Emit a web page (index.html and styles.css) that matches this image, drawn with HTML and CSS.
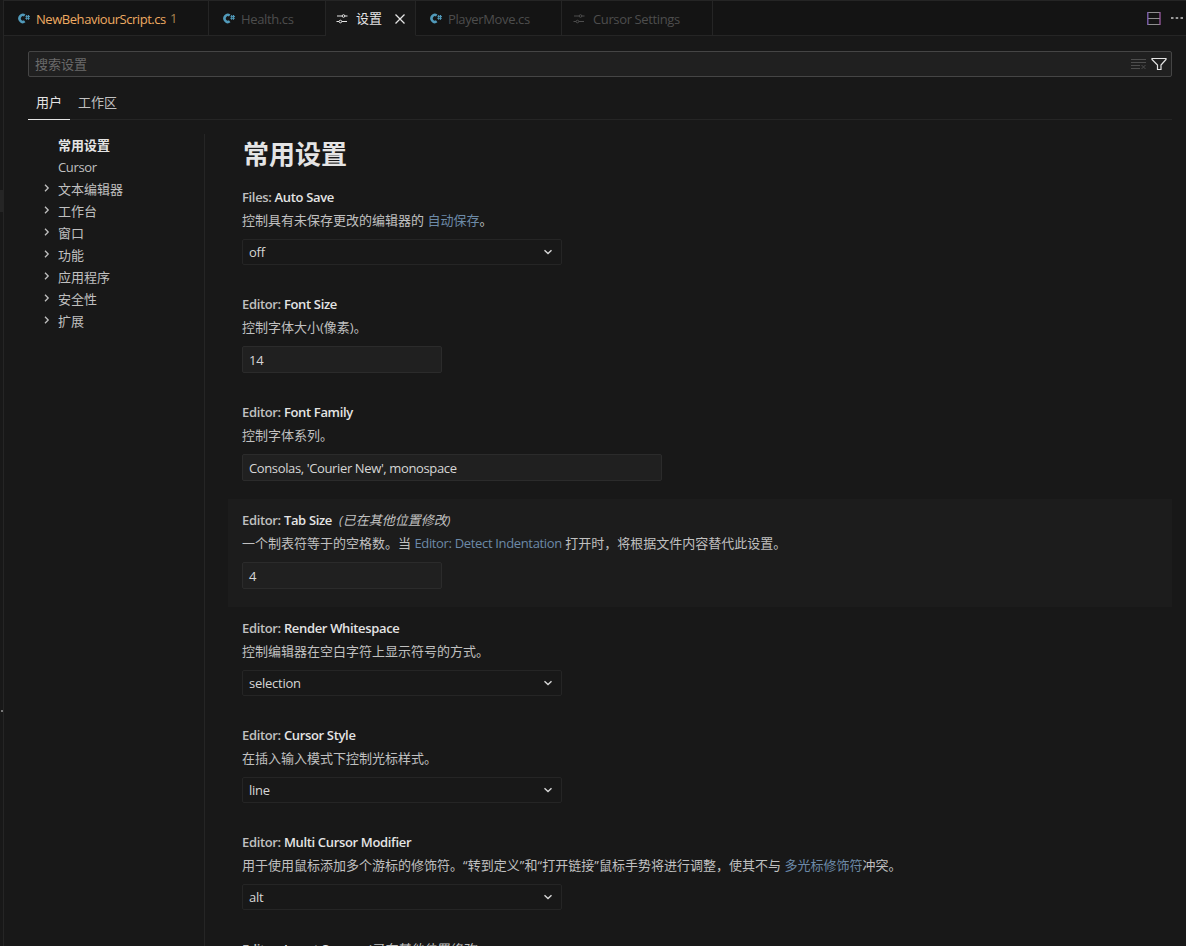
FILE: index.html
```html
<!DOCTYPE html>
<html lang="zh-CN">
<head>
  <meta charset="UTF-8">
  <meta name="viewport" content="width=device-width, initial-scale=1.0">
  <title>设置</title>
  <link rel="stylesheet" href="styles.css">
</head>
<body>
  <svg class="symbols" aria-hidden="true">
    <symbol id="icon-csharp" viewBox="0 0 12 11">
      <path d="M6.700 2.500A3.300 3.500 0 1 0 6.700 8.300" fill="none" stroke="currentColor" stroke-width="2.600"/>
      <path d="M8.700 2v4.800M10.500 2v4.800M7.500 3.400H12M7.300 5.300h4.500" fill="none" stroke="currentColor" stroke-width="1"/>
    </symbol>
    <symbol id="icon-settings" viewBox="0 0 12 10">
      <path d="M1 2h5.200M9 2h2.500M0.500 7.500h2.500M5.800 7.500H11" fill="none" stroke="currentColor" stroke-width="1.200"/>
      <circle cx="7.500" cy="2" r="1.300" fill="none" stroke="currentColor"/>
      <circle cx="4.400" cy="7.500" r="1.300" fill="none" stroke="currentColor"/>
    </symbol>
    <symbol id="icon-right" viewBox="0 0 8 8">
      <path d="M2 0.8 5.200 4 2 7.200" fill="none" stroke="currentColor" stroke-width="1.300"/>
    </symbol>
    <symbol id="icon-down" viewBox="0 0 8 8">
      <path d="M0.500 2.200 4 5.600 7.500 2.200" fill="none" stroke="currentColor" stroke-width="1.400"/>
    </symbol>
  </svg>

  <div class="side-strip">
    <div class="side-thumb"></div>
    <div class="side-dot"></div>
  </div>

  <div class="editor">
    <div class="tab-bar">
      <div class="tab tab-script"><svg class="lang-icon"><use href="#icon-csharp"/></svg><span>NewBehaviourScript.cs</span><span class="badge">1</span></div>
      <div class="tab tab-health"><svg class="lang-icon"><use href="#icon-csharp"/></svg><span>Health.cs</span></div>
      <div class="tab tab-settings active"><svg class="gear-icon"><use href="#icon-settings"/></svg><span>设置</span><svg class="close" viewBox="0 0 10 10"><path d="M0.500 0.500l9 9M9.500 0.500l-9 9" fill="none" stroke="currentColor" stroke-width="1.300"/></svg></div>
      <div class="tab tab-player"><svg class="lang-icon"><use href="#icon-csharp"/></svg><span>PlayerMove.cs</span></div>
      <div class="tab tab-cursor"><svg class="gear-icon"><use href="#icon-settings"/></svg><span>Cursor Settings</span></div>
      <div class="actions">
        <svg class="split" viewBox="0 0 14 14"><path d="M1 1.500h12M1 7.500h12M1 13.500h12" stroke="#8f8f8f"/><path d="M0.800 1v13" stroke="#8464b8" stroke-width="1.300"/><path d="M13 1v13" stroke="#9a5aa0" stroke-width="1.300"/></svg>
        <svg class="more" viewBox="0 0 12 2"><path d="M0 0h2.500v2H0zM4.700 0h2.500v2H4.700zM9.500 0H12v2H9.500z" fill="currentColor"/></svg>
      </div>
    </div>

    <div class="settings">
      <div class="search">
        <span class="placeholder">搜索设置</span>
        <svg class="clear" viewBox="0 0 16 12"><path d="M0 1.500h15M0 4.500h15M0 7.500h9M0 10.500h9M10.500 7l4 4M14.500 7l-4 4" fill="none" stroke="currentColor"/></svg>
        <svg class="filter" viewBox="0 0 16 14"><path d="M1 1.500h14v1L10 8v4.500H6.500V8L1 2.500z" fill="none" stroke="currentColor" stroke-width="1.200"/></svg>
      </div>

      <div class="scopes">
        <div class="scope active">用户</div>
        <div class="scope">工作区</div>
      </div>

      <div class="content">
        <div class="toc">
          <div class="toc-item selected"><span>常用设置</span></div>
          <div class="toc-item latin">Cursor</div>
          <div class="toc-item"><svg class="chevron"><use href="#icon-right"/></svg><span>文本编辑器</span></div>
          <div class="toc-item"><svg class="chevron"><use href="#icon-right"/></svg><span>工作台</span></div>
          <div class="toc-item"><svg class="chevron"><use href="#icon-right"/></svg><span>窗口</span></div>
          <div class="toc-item"><svg class="chevron"><use href="#icon-right"/></svg><span>功能</span></div>
          <div class="toc-item"><svg class="chevron"><use href="#icon-right"/></svg><span>应用程序</span></div>
          <div class="toc-item"><svg class="chevron"><use href="#icon-right"/></svg><span>安全性</span></div>
          <div class="toc-item"><svg class="chevron"><use href="#icon-right"/></svg><span>扩展</span></div>
        </div>

        <div class="list">
          <h1>常用设置</h1>

          <div class="item">
            <div class="title">Files: <b>Auto Save</b></div>
            <div class="desc">控制具有未保存更改的编辑器的 <a>自动保存</a>。</div>
            <div class="select">off<svg class="arrow"><use href="#icon-down"/></svg></div>
          </div>

          <div class="item tall">
            <div class="title">Editor: <b>Font Size</b></div>
            <div class="desc">控制字体大小(像素)。</div>
            <div class="input">14</div>
          </div>

          <div class="item tall">
            <div class="title">Editor: <b>Font Family</b></div>
            <div class="desc">控制字体系列。</div>
            <div class="input wide">Consolas, 'Courier New', monospace</div>
          </div>

          <div class="item tall focused">
            <div class="title">Editor: <b>Tab Size</b><i>(已在其他位置修改)</i></div>
            <div class="desc">一个制表符等于的空格数。当 <a class="latin">Editor: Detect Indentation</a> 打开时，将根据文件内容替代此设置。</div>
            <div class="input">4</div>
          </div>

          <div class="item">
            <div class="title">Editor: <b>Render Whitespace</b></div>
            <div class="desc">控制编辑器在空白字符上显示符号的方式。</div>
            <div class="select">selection<svg class="arrow"><use href="#icon-down"/></svg></div>
          </div>

          <div class="item">
            <div class="title">Editor: <b>Cursor Style</b></div>
            <div class="desc">在插入输入模式下控制光标样式。</div>
            <div class="select">line<svg class="arrow"><use href="#icon-down"/></svg></div>
          </div>

          <div class="item">
            <div class="title">Editor: <b>Multi Cursor Modifier</b></div>
            <div class="desc">用于使用鼠标添加多个游标的修饰符。<span class="quote">“</span>转到定义<span class="quote">”</span>和<span class="quote">“</span>打开链接<span class="quote">”</span>鼠标手势将进行调整，使其不与 <a>多光标修饰符</a>冲突。</div>
            <div class="select">alt<svg class="arrow"><use href="#icon-down"/></svg></div>
          </div>

          <div class="item last">
            <div class="title">Editor: <b>Insert Spaces</b><i>(已在其他位置修改)</i></div>
          </div>
        </div>
      </div>
    </div>
  </div>
</body>
</html>
```

FILE: styles.css
```css
* {
  box-sizing: border-box;
}
body {
  margin: 0;
  height: 946px;
  display: flex;
  overflow: hidden;
  background: #181818;
  color: #c0c0c0;
  font-family: "Open Sans", "Noto Sans CJK SC", sans-serif;
  font-size: 13px;
}
.symbols {
  display: none;
}
svg {
  flex: none;
}
.side-strip {
  width: 4px;
  padding-top: 190px;
  background: #181818;
  border-right: 1px solid #252525;
}
.side-thumb {
  height: 22px;
  background: #252525;
}
.side-dot {
  width: 2px;
  height: 2px;
  margin: 498px 0 0 1px;
  background: #777777;
}
.editor {
  flex: 1;
  min-width: 0;
}

/* tabs */
.tab-bar {
  display: flex;
  height: 36px;
  background: #141414;
  border-top: 1px solid #252525;
}
.tab {
  display: flex;
  align-items: center;
  border-right: 1px solid #252525;
  border-bottom: 1px solid #252525;
  color: #4d4d4d;
  white-space: nowrap;
  letter-spacing: -0.37px;
}
.tab span {
  padding-top: 2px;
}
.tab-script {
  width: 205px;
  padding-left: 14px;
  color: #efab62;
  letter-spacing: -0.45px;
}
.tab-health {
  width: 117px;
  padding-left: 14px;
}
.tab-settings {
  width: 90px;
  padding-left: 10px;
}
.tab-player {
  width: 146px;
  padding-left: 14px;
}
.tab-cursor {
  width: 151px;
  padding-left: 11px;
}
.tab.active {
  background: #181818;
  border-bottom-color: #181818;
  color: #e4e4e4;
  letter-spacing: 0;
}
.tab.active span {
  padding: 0 0 1px;
}
.lang-icon {
  width: 12px;
  height: 11px;
  margin-right: 6px;
  color: #519aba;
}
.gear-icon {
  width: 12px;
  height: 10px;
  margin: 1px 8px 0 0;
}
.badge {
  margin-left: 4px;
  color: #a98250;
}
.tab .badge {
  padding-top: 0;
}
.close {
  width: 10px;
  height: 10px;
  margin: 1px 0 0 13px;
}
.actions {
  flex: 1;
  display: flex;
  align-items: center;
  justify-content: flex-end;
  padding-right: 3px;
  border-bottom: 1px solid #252525;
  color: #9a9a9a;
}
.split {
  width: 14px;
  height: 14px;
  margin: 0 10px 1px 0;
}
.more {
  width: 12px;
  height: 2px;
}

/* settings editor */
.settings {
  padding: 15px 14px 0 24px;
}
.search {
  display: flex;
  align-items: center;
  height: 26px;
  padding: 0 4px 0 6px;
  background: #202020;
  border: 1px solid #454545;
  border-radius: 2px;
}
.placeholder {
  flex: 1;
  padding-bottom: 2px;
  color: #6a6a6a;
}
.clear {
  width: 16px;
  height: 12px;
  margin-right: 4px;
  color: #4d4d4d;
}
.filter {
  width: 16px;
  height: 14px;
  color: #e4e4e4;
}
.scopes {
  display: flex;
  height: 43px;
  padding-top: 11px;
  border-bottom: 1px solid #252525;
}
.scope {
  height: 32px;
  padding: 0 8px;
  line-height: 29px;
}
.scope.active {
  color: #e4e4e4;
  border-bottom: 1px solid #e4e4e4;
}
.content {
  display: flex;
  height: 826px;
  padding-top: 14px;
}
.toc {
  width: 177px;
  border-right: 1px solid #252525;
}
.toc-item {
  display: flex;
  align-items: center;
  height: 22px;
  padding-left: 30px;
}
.toc-item span {
  padding-bottom: 2px;
}
.toc-item.selected {
  color: #e4e4e4;
  font-weight: 700;
}
.toc-item:has(.chevron) {
  padding-left: 15px;
}
.chevron {
  width: 8px;
  height: 8px;
  margin: 0 7px 2px 0;
}
.latin {
  letter-spacing: -0.34px;
}
.list {
  flex: 1;
  min-width: 0;
  padding-left: 23px;
}
h1 {
  height: 42px;
  margin: 0;
  padding-left: 15px;
  line-height: 40px;
  font-size: 26px;
  font-weight: 700;
  color: #e4e4e4;
}
.item {
  height: 107px;
  padding: 11px 14px 0;
  white-space: nowrap;
}
.item.tall {
  height: 108px;
}
.item.focused {
  background: #1c1c1c;
}
.item.last {
  height: 32px;
}
.title {
  height: 20px;
  line-height: 20px;
  font-weight: 600;
  letter-spacing: -0.34px;
}
.title b {
  color: #e4e4e4;
  font-weight: 600;
}
.title i {
  margin-left: 7px;
  font-weight: 400;
  letter-spacing: 0;
}
.last .title i {
  margin-left: 4px;
}
.desc {
  height: 32px;
  padding-top: 3px;
  line-height: 20px;
}
.desc a {
  color: #6c8aa8;
}
.quote {
  font-family: "Open Sans", sans-serif;
  letter-spacing: 0.2px;
}
.select,
.input {
  display: flex;
  align-items: center;
  width: 320px;
  height: 26px;
  padding: 0 9px 0 6px;
  color: #d6d6d6;
  border: 1px solid #252525;
  border-radius: 2px;
  letter-spacing: -0.25px;
}
.input {
  width: 200px;
  height: 27px;
  background: #202020;
  border-color: #2b2b2b;
}
.input.wide {
  width: 420px;
  letter-spacing: -0.37px;
}
.arrow {
  width: 8px;
  height: 8px;
  margin-left: auto;
}
```
